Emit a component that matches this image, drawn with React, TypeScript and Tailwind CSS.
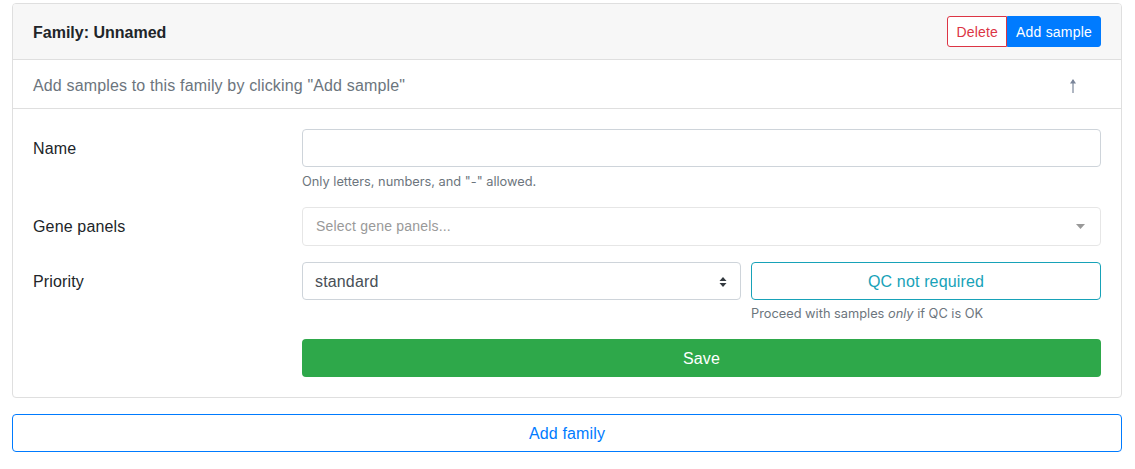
const font = { fontFamily: '"Liberation Sans", Arial, sans-serif' }
const smallFont = { fontFamily: 'Inter, "Liberation Sans", Arial, sans-serif' }

function FormRow({ label, children }: { label: string; children: React.ReactNode }) {
  return (
    <div className="flex mb-4">
      <label className="w-[269px] shrink-0 pt-[8px] pb-[6px] leading-6 text-[16px] text-[#212529] tracking-[0.15px]">
        {label}
      </label>
      <div className="flex-1 min-w-0">{children}</div>
    </div>
  )
}

export default function App() {
  return (
    <div className="pl-3 pr-[13px] pt-[3px] bg-white" style={font}>
      {/* Family card */}
      <div className="border border-[#dfdfdf] rounded-[4px] mb-4 overflow-hidden">
        <div className="flex items-center justify-between bg-[#f7f7f7] border-b border-[#dfdfdf] px-5 py-3">
          <h5 className="font-bold text-[16px] text-[#212529] mt-[3px]">Family: Unnamed</h5>
          <div className="flex">
            <button className="h-[31px] px-2 pt-[1px] text-[14px] tracking-[0.2px] text-[#dc3545] bg-white border border-[#dc3545] rounded-l-[3px]">
              Delete
            </button>
            <button className="h-[31px] px-2 pt-[1px] text-[14px] tracking-[0.2px] text-white bg-[#007bff] border border-[#007bff] rounded-r-[3px]">
              Add sample
            </button>
          </div>
        </div>

        <div className="flex items-center justify-between border-b border-[#dfdfdf] px-5 pt-[14px] pb-[10px] leading-6">
          <span className="text-[16px] text-[#6c757d] tracking-[0.15px]">Add samples to this family by clicking "Add sample"</span>
          <svg width="8" height="16" viewBox="0 0 8 16" className="mr-[24px]">
            <path d="M4 2 L4 15" stroke="#7a8599" strokeWidth="1.2" />
            <path d="M4 1 L7 5.5 L1 5.5 Z" fill="#7a8599" />
          </svg>
        </div>

        <div className="p-5">
          <FormRow label="Name">
            <input className="block w-full h-[38px] px-3 border border-[#ced4da] rounded-[4px] text-[16px] outline-none" />
            <small className="block mt-[5px] text-[12.8px] leading-[19px] text-[#6c757d]" style={smallFont}>
              Only letters, numbers, and "-" allowed.
            </small>
          </FormRow>

          <FormRow label="Gene panels">
            <div className="flex items-center h-[39px] pl-[13px] pr-[15px] border border-[#e6e6e6] rounded-[4px]">
              <span className="flex-1 text-[14px] text-[#999] tracking-[0.2px]">Select gene panels...</span>
              <svg width="9" height="5" viewBox="0 0 9 5">
                <path d="M0 0 L9 0 L4.5 5 Z" fill="#999" />
              </svg>
            </div>
          </FormRow>

          <FormRow label="Priority">
            <div className="flex gap-[10px]">
              <div className="w-[439px] shrink-0">
                <div className="flex items-center h-[38px] px-3 pt-[1px] border border-[#ced4da] rounded-[4px]">
                  <span className="flex-1 text-[16px] text-[#495057] tracking-[0.15px]">standard</span>
                  <svg width="8" height="12" viewBox="0 0 8 12" className="mr-[1px]">
                    <path d="M4 1 L7.5 5 L0.5 5 Z M4 11 L7.5 7 L0.5 7 Z" fill="#343a40" />
                  </svg>
                </div>
              </div>
              <div className="flex-1">
                <button className="w-full h-[38px] pt-[2px] border border-[#17a2b8] rounded-[4px] text-[16px] text-[#17a2b8] bg-white tracking-[0.15px]">
                  QC not required
                </button>
                <small className="block mt-1 text-[12.8px] leading-[19px] text-[#6c757d]" style={smallFont}>
                  Proceed with samples <em>only</em> if QC is OK
                </small>
              </div>
            </div>
          </FormRow>

          <div className="flex">
            <div className="w-[269px] shrink-0" />
            <button className="flex-1 h-[38px] pt-[2px] rounded-[4px] bg-[#2ea84a] text-white text-[16px] tracking-[0.15px]">Save</button>
          </div>
        </div>
      </div>

      <button className="w-full h-[38px] pt-[2px] border border-[#007bff] rounded-[4px] text-[16px] text-[#007bff] bg-white tracking-[0.15px]">
        Add family
      </button>
    </div>
  )
}
